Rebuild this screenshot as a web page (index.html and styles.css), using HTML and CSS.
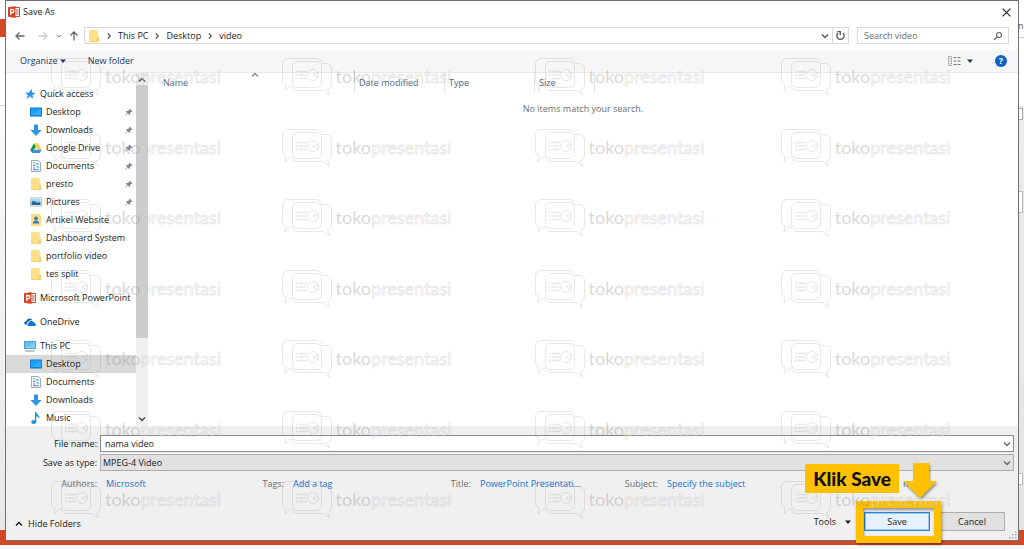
FILE: index.html
```
<!DOCTYPE html>
<html lang="en">
<head>
<meta charset="utf-8">
<meta name="viewport" content="width=device-width, initial-scale=1">
<title>Save As</title>
<link rel="stylesheet" href="styles.css">
</head>
<body>
<svg class="defs" aria-hidden="true">
  <symbol id="ppt" viewBox="0 0 12 12"><path fill="#fff" stroke="#d24726" d="M6 1.5h5.500v9H6z"/><path stroke="#d24726" d="M8 4h2.500M8 6h2.500M8 8h2.500"/><path fill="#d24726" d="M0 1.300 7.500 0v12L0 10.700z"/><path fill="none" stroke="#fff" stroke-width="1.300" d="M2.800 9V3.500h1.400a1.500 1.500 0 0 1 0 3.200H2.800"/></symbol>
  <symbol id="folder" viewBox="0 0 12 12"><path fill="#ffe08a" d="M1 0h8.500v12H1z"/><path fill="#f8cf62" d="M9 7h2v5H1v-.8h8z"/><path fill="#fbd978" d="M9.500 2h.8v6h-.8z"/></symbol>
  <symbol id="userfolder" viewBox="0 0 12 12"><path fill="#ffdc7c" d="M1 0h8.500l1.500 2v10H1z"/><circle cx="6" cy="4.500" r="1.900" fill="#3c7cc4"/><path fill="#3c7cc4" d="M2.800 9.500c0-4 6.400-4 6.400 0z"/></symbol>
  <symbol id="star" viewBox="0 0 12 12"><path fill="#2a97ea" d="m7.500 .8.700 3.600 3.600.6-3.200 2 .5 3.800-3-2.400L2.500 11l1.400-3.800L1 4.500l3.900.2z"/></symbol>
  <symbol id="desktop" viewBox="0 0 12 12"><path fill="#0a6cc4" d="M0 1.500h12v9H0z"/><path fill="#1ba0f7" d="M.7 2.200h10.600v7H.7z"/><path fill="#4bb8ff" d="M.7 9.200 11.300 3v6.200z" opacity=".5"/></symbol>
  <symbol id="down" viewBox="0 0 12 12"><path fill="#3492e0" d="M4 .5h4V6h3.700L6 12 .3 6H4z"/></symbol>
  <symbol id="drive" viewBox="0 0 12 12"><path fill="#0f9d58" d="M4 1.200 6 4.700 2.200 11 .3 7.700z"/><path fill="#ffcd40" d="M4 1.200h4l3.700 6.500h-4z"/><path fill="#4285f4" d="M4.200 7.700h7.500L9.800 11H2.200z"/></symbol>
  <symbol id="doc" viewBox="0 0 12 12"><path fill="#fff" stroke="#8b979f" stroke-width=".8" d="M1.500.5H8.500l2 2v9h-9z"/><path stroke="#2d8fd8" stroke-width="1.100" d="M3 3h2M6 4h3M3 5.500h2.500M6.500 7H9M3 8h2M3 9.800h6"/></symbol>
  <symbol id="pic" viewBox="0 0 12 12"><path fill="#fff" stroke="#9aa6ae" stroke-width=".8" d="M.4 1.900h11.200v8.200H.4z"/><path fill="#9cd5f5" d="M1.500 3h9v3h-9z"/><path fill="#2a6796" d="M1.500 5.500 4 5l3 1.500 3.500-.5V9h-9z"/></symbol>
  <symbol id="cloud" viewBox="0 0 12 12"><path fill="#0a64b8" d="M.8 8.500C-.3 7 .8 5.300 2.300 5.300 3 2 7 1.500 8.200 4 5.500 3.500 4.500 5 4.300 6 3 6.300 2.600 7.500 3 8.500z"/><path fill="#0a78d0" d="M4.500 10C3 9.800 3 7.500 4.900 7c0-2.400 3.600-3.200 4.500-.7C11 6.200 11.300 7.500 11.200 7.900c1.100.3 1 2-.2 2.100z"/></symbol>
  <symbol id="pc" viewBox="0 0 12 12"><path fill="#4a8fbc" d="M0 1h12v8H0z"/><path fill="#62c0f8" d="M.7 1.700h10.600v6.500H.7z"/><path fill="#a4dcfc" d="M.7 8.200 11.300 2v6.200z" opacity=".5"/><path stroke="#7795a7" d="M1 11h10"/></symbol>
  <symbol id="music" viewBox="0 0 12 12"><ellipse cx="3.700" cy="10" rx="2.500" ry="1.900" fill="#1494ea"/><path fill="#1494ea" d="M5 0h1.300c0 2.700 4 3 3.300 7C9 5 7.500 4.500 6.300 4.200V10H5z"/></symbol>
  <symbol id="pin" viewBox="0 0 10 10"><path fill="#7d8b95" d="m5.500.5 4 4-1 .5-.8-.2-1.500 1.500.1 1.900-.8.700-1.900-1.900L.5 9.800l-.3-.3 2.700-3.200L1 4.500l.8-.7 1.900.1 1.500-1.500L5 1.500z"/></symbol>
  <symbol id="chevdown" viewBox="0 0 8 8"><path fill="none" stroke="currentColor" stroke-width="1.300" d="m1 2.500 3 3 3-3"/></symbol>
  <symbol id="chevup" viewBox="0 0 8 8"><path fill="none" stroke="currentColor" stroke-width="1.300" d="m1 5.500 3-3 3 3"/></symbol>
  <symbol id="chevright" viewBox="0 0 8 8"><path fill="none" stroke="currentColor" stroke-width="1.200" d="m2.800 1.500 2.500 2.500-2.500 2.500"/></symbol>
  <symbol id="tri" viewBox="0 0 8 8"><path fill="currentColor" d="M1 2.500h6l-3 3.500z"/></symbol>
  <symbol id="wm" viewBox="0 0 50 38"><g fill="none" stroke="currentColor"><path d="M10.500 28H8L3 33l1-6C2 26.500.5 25 .5 22V6C.5 3 2.500.5 6 .5h28c3 0 5 1.500 5.500 4"/><rect x="10.500" y="3.500" width="29" height="26" rx="5"/><path d="M39.500 5.500H44c3 0 5.500 2 5.500 5v16c0 3-2 5-4 5l2 5.500-6-4.500H16c-3 0-5-1.500-5.500-4"/><circle cx="31" cy="17" r="5.500"/><path d="M36.500 15 31 17l5 3"/><path stroke-width="1.500" d="M14 13.500h2m1 0h8m-11 3.500h2m1 0h7m-10 3.500h2m1 0h8"/></g></symbol>
</svg>

<div class="backdrop" aria-hidden="true">
  <div class="app-ribbon"></div>
  <div class="app-page"></div>
  <div class="app-status"></div>
  <div class="app-edge"><span class="edge-letter">n</span><span class="edge-scroll"></span><span class="edge-box"></span><span class="edge-foot"></span></div>
</div>

<main class="dialog">
  <header class="titlebar">
    <svg class="icon"><use href="#ppt"/></svg>
    <h1>Save As</h1>
    <button class="close" aria-label="Close"><svg viewBox="0 0 8 8"><path d="m.5.5 7 7m0-7-7 7" fill="none" stroke="#222"/></svg></button>
  </header>

  <nav class="navbar" aria-label="Location">
    <button class="arrow" aria-label="Back"><svg viewBox="0 0 10 10"><path d="M9.500 5H1m3.500-3.500L1 5l3.500 3.500"/></svg></button>
    <button class="arrow off" aria-label="Forward"><svg viewBox="0 0 10 10"><path d="M.5 5H9M5.500 1.500 9 5 5.500 8.500"/></svg></button>
    <button class="recent" aria-label="Recent locations"><svg><use href="#chevdown"/></svg></button>
    <button class="arrow" aria-label="Up"><svg viewBox="0 0 10 10"><path d="M5 9.500V1M1.500 4.500 5 1l3.500 3.500"/></svg></button>
    <div class="address">
      <svg class="icon"><use href="#folder"/></svg>
      <svg class="chev"><use href="#chevright"/></svg><a href="#">This PC</a>
      <svg class="chev"><use href="#chevright"/></svg><a href="#">Desktop</a>
      <svg class="chev"><use href="#chevright"/></svg><a href="#">video</a>
      <button class="drop" aria-label="Previous locations"><svg><use href="#chevdown"/></svg></button>
      <button class="refresh" aria-label="Refresh"><svg viewBox="0 0 10 10"><path d="M7.200 2.700a3.300 3.300 0 1 1-4.400 0M2 1.500h2.800v3" fill="none" stroke="#555" stroke-width="1.200"/></svg></button>
    </div>
    <div class="search">
      <input type="search" placeholder="Search video" aria-label="Search video">
      <svg viewBox="0 0 10 10"><circle cx="6" cy="4" r="2.500"/><path d="M4 6 1 9"/></svg>
    </div>
  </nav>

  <div class="toolbar">
    <button class="organize">Organize <svg class="tri"><use href="#tri"/></svg></button>
    <button>New folder</button>
    <button class="view" aria-label="Change your view"><svg class="viewicon" viewBox="0 0 13 10"><path d="M.5.500h3v9h-3z" fill="#e4e4e4" stroke="#999" stroke-dasharray="1.500 .8"/><path d="M5.500 1.500h3m1 0h3m-7 3.500h3m1 0h3m-7 3.500h3m1 0h3" stroke="#777"/></svg><svg class="tri"><use href="#tri"/></svg></button>
    <button class="help" aria-label="Help">?</button>
  </div>

  <div class="content">
    <aside class="sidebar">
      <div class="tree">
        <ul>
          <li class="root"><svg class="icon"><use href="#star"/></svg>Quick access</li>
          <li><svg class="icon"><use href="#desktop"/></svg>Desktop<svg class="pin"><use href="#pin"/></svg></li>
          <li><svg class="icon"><use href="#down"/></svg>Downloads<svg class="pin"><use href="#pin"/></svg></li>
          <li><svg class="icon"><use href="#drive"/></svg>Google Drive<svg class="pin"><use href="#pin"/></svg></li>
          <li><svg class="icon"><use href="#doc"/></svg>Documents<svg class="pin"><use href="#pin"/></svg></li>
          <li><svg class="icon"><use href="#folder"/></svg>presto<svg class="pin"><use href="#pin"/></svg></li>
          <li><svg class="icon"><use href="#pic"/></svg>Pictures<svg class="pin"><use href="#pin"/></svg></li>
          <li><svg class="icon"><use href="#userfolder"/></svg>Artikel Website</li>
          <li><svg class="icon"><use href="#folder"/></svg>Dashboard System</li>
          <li><svg class="icon"><use href="#folder"/></svg>portfolio video</li>
          <li><svg class="icon"><use href="#folder"/></svg>tes split</li>
        </ul>
        <ul><li class="root"><svg class="icon"><use href="#ppt"/></svg>Microsoft PowerPoint</li></ul>
        <ul><li class="root"><svg class="icon"><use href="#cloud"/></svg>OneDrive</li></ul>
        <ul>
          <li class="root"><svg class="icon"><use href="#pc"/></svg>This PC</li>
          <li class="selected"><svg class="icon"><use href="#desktop"/></svg>Desktop</li>
          <li><svg class="icon"><use href="#doc"/></svg>Documents</li>
          <li><svg class="icon"><use href="#down"/></svg>Downloads</li>
          <li><svg class="icon"><use href="#music"/></svg>Music</li>
        </ul>
      </div>
      <div class="scrollbar" aria-hidden="true"><svg><use href="#chevup"/></svg><span class="thumb"></span><svg><use href="#chevdown"/></svg></div>
    </aside>
    <section class="files">
      <div class="columns">
        <button class="col-name">Name<svg class="sort"><use href="#chevup"/></svg></button><button>Date modified</button><button>Type</button><button class="col-size">Size</button>
      </div>
      <p class="empty">No items match your search.</p>
    </section>
  </div>

  <footer class="footer">
    <div class="fields">
      <label for="fname">File name:</label>
      <div class="combo"><input id="fname" type="text" value="nama video"><svg><use href="#chevdown"/></svg></div>
      <label for="ftype">Save as type:</label>
      <div class="combo type"><select id="ftype"><option>MPEG-4 Video</option></select><svg><use href="#chevdown"/></svg></div>
    </div>
    <dl class="meta">
      <dt>Authors:</dt><dd><a href="#">Microsoft</a></dd>
      <dt>Tags:</dt><dd><a href="#">Add a tag</a></dd>
      <dt>Title:</dt><dd><a href="#">PowerPoint Presentati...</a></dd>
      <dt>Subject:</dt><dd><a href="#">Specify the subject</a></dd>
      <dt></dt><dd><a href="#">m...</a></dd>
    </dl>
    <div class="actions">
      <button class="hide"><svg><use href="#chevup"/></svg>Hide Folders</button>
      <button class="tools">Tools <svg class="tri"><use href="#tri"/></svg></button>
      <div class="target">
        <button class="push save">Save</button>
        <div class="frame"></div>
        <svg class="pointer" viewBox="0 0 36 37" aria-hidden="true"><path fill="#ffc000" d="M11 0h16v18h8L18 35 1 18h10z"/></svg>
        <strong class="callout">Klik Save</strong>
      </div>
      <button class="push">Cancel</button>
    </div>
    <svg class="grip" viewBox="0 0 8 8" aria-hidden="true"><path fill="#aaa" d="M6 0h1.500v1.500H6zM3 3h1.500v1.500H3zM6 3h1.500v1.500H6zM0 6h1.500v1.500H0zM3 6h1.500v1.500H3zM6 6h1.500v1.500H6z"/></svg>
  </footer>
</main>

<div class="watermarks" aria-hidden="true"></div>
<script src="watermark.js"></script>
</body>
</html>
```
FILE: styles.css
```
* { box-sizing: border-box; }
body {
  margin: 0;
  height: 100vh;
  display: flex;
  flex-direction: column;
  position: relative;
  overflow: hidden;
  background: #fff;
  color: #1a1a1a;
  font: 9px/12px "Open Sans", "Noto Sans", sans-serif;
}
button, input, select { font: inherit; color: inherit; margin: 0; }
button { background: none; border: 0; padding: 0; display: flex; align-items: center; }
a { color: inherit; text-decoration: none; }
ul, dl, dd, p, h1 { margin: 0; padding: 0; font: inherit; list-style: none; }
svg { width: 8px; height: 8px; flex: none; }
.defs { position: absolute; width: 0; height: 0; }
.icon { width: 12px; height: 12px; }

/* application window behind the dialog */
.backdrop { position: absolute; inset: 0 0 4px; display: flex; flex-direction: column; padding-top: 19px; }
.app-ribbon { height: 18px; width: 6px; background: #d24726; }
.app-page { flex: 1; margin-right: 6px; background: linear-gradient(#fff 68px, #d8d8d8 68px, #d8d8d8 69px, #fbfbfb 69px, #e8e8e8); }
.app-status { height: 15px; background: #d24726; }
.app-edge { position: absolute; inset: 0 0 15px auto; width: 6px; display: flex; flex-direction: column; overflow: hidden; background: linear-gradient(#fff 106px, #ececec 106px, #e4e4e4); }
.edge-letter { height: 38px; padding-top: 20px; border-bottom: 1px solid #ccc; color: #555; }
.edge-scroll { height: 12px; margin-top: 70px; width: 5px; border: 1px solid #aaa; background: #fff; }
.edge-box { height: 22px; margin-top: 71px; width: 5px; border: 1px solid #bbb; background: #fff; }
.edge-foot { height: 12px; margin-top: 260px; width: 5px; border: 1px solid #bbb; background: #fff; }

.dialog {
  flex: 1;
  min-height: 0;
  display: flex;
  flex-direction: column;
  position: relative;
  margin: 0 5px 8px 5px;
  border: 1px solid #707070;
  background: #fff;
}
.titlebar { display: flex; align-items: center; height: 22px; padding: 0 7px 0 2px; gap: 3px; }
.close { margin-left: auto; }
.close svg { width: 9px; height: 9px; }

.navbar { display: flex; align-items: center; height: 27px; padding: 0 9px 2px 9px; }
.arrow svg { width: 10px; height: 10px; fill: none; stroke: #666; stroke-width: 1.3; }
.arrow + .arrow { margin-left: 13px; }
.arrow.off svg { stroke: #ccc; }
.recent { margin: 0 7px 0 8px; color: #777; }
.recent svg { width: 6px; height: 6px; }
.address, .search { display: flex; align-items: center; height: 17px; border: 1px solid #d9d9d9; }
.address { flex: 1; margin: 0 8px 0 5px; padding-left: 3px; }
.address .chev { margin: 0 5px; color: #555; }
.drop { margin-left: auto; margin-right: 3px; color: #555; }
.refresh { height: 15px; padding: 0 2px; border-left: 1px solid #d9d9d9; }
.refresh svg { width: 11px; height: 11px; }
.search { width: 152px; padding: 0 5px 0 6px; }
.search input { flex: 1; min-width: 0; padding: 0; border: 0; outline: 0; background: none; }
.search input::placeholder { color: #6d6d6d; opacity: 1; }
.search svg { width: 10px; height: 10px; fill: none; stroke: #666; stroke-width: 1.2; }

.toolbar { display: flex; align-items: center; height: 23px; padding: 0 11px 0 14px; gap: 21px; background: #f5f6f7; border-bottom: 1px solid #e6e8ea; color: #1e395b; }
.organize { gap: 1px; }
.view { margin-left: auto; gap: 5px; }
.viewicon { width: 13px; height: 10px; }
.help { width: 12px; height: 12px; justify-content: center; border-radius: 50%; background: #0a64c0; color: #fff; font-weight: 700; }

.content { flex: 1; min-height: 0; display: flex; }
.sidebar { display: flex; width: 142px; }
.tree { flex: 1; min-width: 0; padding-top: 12px; overflow: hidden; }
.tree ul + ul { margin-top: 6px; }
.tree li { display: flex; align-items: center; height: 18px; padding-left: 24px; gap: 4px; white-space: nowrap; }
.tree li.root { padding-left: 18px; }
.tree li.selected { background: #d9d9d9; }
.pin { margin: 0 3px 0 auto; }
.scrollbar { width: 12px; display: flex; flex-direction: column; align-items: center; padding: 3px 0; background: #f0f0f0; color: #444; }
.scrollbar .thumb { width: 12px; height: 253px; margin: 1px 0 auto; background: #cdcdcd; }

.files { flex: 1; min-width: 0; }
.columns { display: flex; height: 20px; color: #4c607a; }
.columns button { width: 90px; padding-left: 4px; border-right: 1px solid #e5e5e5; }
.columns .col-name { width: 207px; padding-left: 15px; position: relative; }
.columns .col-size { width: 60px; }
.columns .sort { position: absolute; left: 50%; top: -2px; color: #888; }
.empty { padding-top: 10px; text-align: center; color: #6d6d6d; }

.footer { position: relative; padding: 9px 4px 9px 0; background: #f0f0f0; }
.fields { display: grid; grid-template-columns: 91px 1fr; gap: 2px 3px; align-items: center; }
.fields label { text-align: right; }
.combo { display: flex; align-items: center; height: 17px; padding-right: 2px; border: 1px solid #8a8a8a; background: #fff; }
.combo svg { color: #666; }
.combo.type { border-color: #adadad; background: #e1e1e1; }
.combo input, .combo select { flex: 1; min-width: 0; height: 15px; border: 0; outline: 0; padding: 0 4px; background: none; appearance: none; }
.combo select { padding: 0 2px; }
.meta { display: grid; grid-template-columns: 91px repeat(3, 129px 40px) 129px 89px 1fr; column-gap: 9px; padding-top: 7px; white-space: nowrap; }
.meta dt { text-align: right; color: #6d6d6d; }
.meta dd { color: #1a6fd0; }
.actions { display: flex; align-items: center; padding: 22px 9px 0 9px; }
.hide { gap: 5px; margin-right: auto; padding-top: 4px; }
.tools { gap: 8px; margin-right: 12px; }
.target { position: relative; margin-right: 9px; }
.push { width: 66px; height: 19px; justify-content: center; border: 1px solid #adadad; background: #e1e1e1; }
.push.save { border: 1px solid #2b83d0; box-shadow: inset 0 0 0 1px #9cc8ee; background: #e5f1fb; }
.frame { position: absolute; inset: -11px -11px -12px -8px; border: 7px solid #ffc000; box-shadow: 1px 2px 3px #0006, inset 1px 2px 3px #0006; pointer-events: none; }
.pointer { position: absolute; right: -8px; bottom: 31px; width: 36px; height: 37px; filter: drop-shadow(1px 2px 1px #0006); }
.callout { position: absolute; right: 31px; bottom: 38px; z-index: 2; padding: 0 8px; background: #ffc000; color: #111; font: 900 19px/29px Lato, sans-serif; white-space: nowrap; }
.grip { position: absolute; right: 1px; bottom: 1px; }

/* repeated brand overlay */
.watermarks {
  position: absolute;
  inset: 58px 0 30px 51px;
  display: grid;
  grid-template-columns: 23.7% 26% 25.3% 1fr;
  align-content: space-between;
  overflow: hidden;
  pointer-events: none;
  color: #8883;
}
.mark { display: flex; align-items: center; gap: 4px; height: 38px; font: 18px/22px Lato, sans-serif; }
.mark span { padding-bottom: 2px; color: #8885; }
.mark svg { width: 50px; height: 38px; }
.mark b { font-weight: 400; color: #fff6; -webkit-text-stroke: 1px #8883; }
```
FILE: watermark.js
```
const layer = document.querySelector('.watermarks');
for (let i = 0; i < 28; i++) {
  const mark = document.createElement('div');
  mark.className = 'mark';
  mark.innerHTML = '<svg><use href="#wm"/></svg><span>toko<b>presentasi</b></span>';
  layer.append(mark);
}
```
